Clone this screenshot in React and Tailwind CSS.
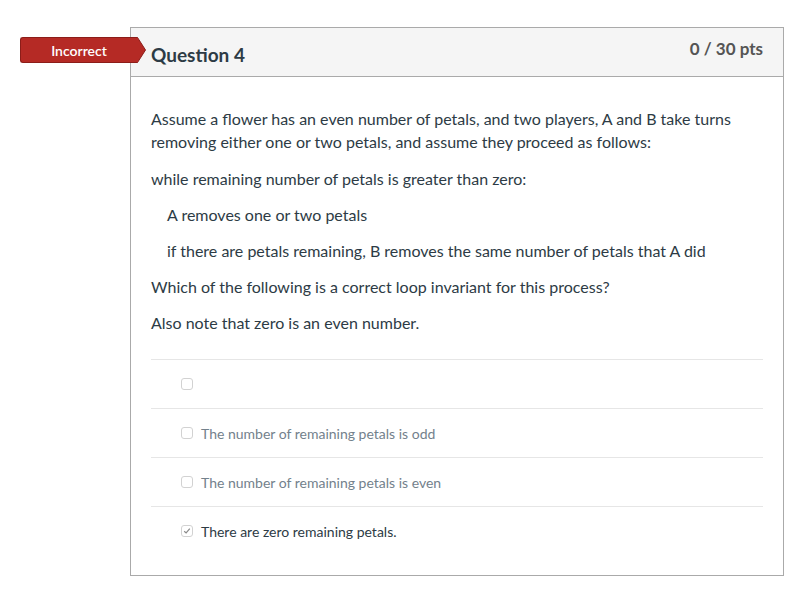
export default function App() {
  const answers = [
    { text: "", checked: false },
    { text: "The number of remaining petals is odd", checked: false },
    { text: "The number of remaining petals is even", checked: false },
    { text: "There are zero remaining petals.", checked: true },
  ]

  return (
    <div className="min-h-[594px] w-[810px] bg-white pt-[27px] pl-[130px]" style={{ fontFamily: "Lato, 'Open Sans', sans-serif" }}>
      <div className="relative w-[654px] border border-[#aaaaaa]">
        {/* incorrect badge */}
        <div className="absolute left-[-111px] top-[9px] flex h-[26px] items-center">
          <div className="flex h-[26px] w-[117px] items-center justify-center rounded-l-[3px] border border-r-0 border-[#8c1d19] bg-[#b52a25] text-[14px] font-semibold text-white">
            Incorrect
          </div>
          <svg width="9" height="26" viewBox="0 0 9 26" className="block">
            <path d="M0 0.5 L0.5 0.5 L8.5 13 L0.5 25.5 L0 25.5 Z" fill="#b52a25" stroke="#8c1d19" strokeWidth="1" />
            <rect x="0" y="1" width="1" height="24" fill="#b52a25" />
          </svg>
        </div>

        <div className="flex h-[49px] items-start justify-between border-b border-[#aaaaaa] bg-[#f5f5f5] px-[20px]">
          <h2 className="mt-[15px] text-[19px] font-bold leading-[23px] text-[#2d3b45]">Question 4</h2>
          <div className="mt-[11px] text-[17px] font-bold leading-[20px] text-[#545454]">0 / 30 pts</div>
        </div>

        <div className="px-[20px] pt-[30px] pb-[20px] text-[16px] leading-[23px] text-[#2d3b45]">
          <p className="mb-[14px]">
            Assume a flower has an even number of petals, and two players, A and B take turns removing either one or two petals, and assume they proceed as follows:
          </p>
          <p className="mb-[13px]">while remaining number of petals is greater than zero:</p>
          <p className="mb-[13px] pl-[16px]">A removes one or two petals</p>
          <p className="mb-[13px] pl-[16px]">if there are petals remaining, B removes the same number of petals that A did</p>
          <p className="mb-[13px]">Which of the following is a correct loop invariant for this process?</p>
          <p>Also note that zero is an even number.</p>

          <div className="mt-[25px]">
            {answers.map((a, i) => (
              <div key={i} className="flex h-[49px] items-center border-t border-[#e6e6e6] pl-[30px]">
                <span className="flex h-[12px] w-[12px] items-center justify-center rounded-[3px] border border-[#d2d2d2] bg-white">
                  {a.checked && (
                    <svg width="8" height="8" viewBox="0 0 8 8">
                      <path d="M1.2 4.2 L3.1 6 L6.8 1.6" fill="none" stroke="#8a8a8a" strokeWidth="1.2" />
                    </svg>
                  )}
                </span>
                <span className={"ml-[8px] pt-[1px] text-[14px] leading-[18px] " + (a.checked ? "text-[#2d3b45]" : "text-[#73818c]")}>
                  {a.text}
                </span>
              </div>
            ))}
          </div>
        </div>
      </div>
    </div>
  )
}
